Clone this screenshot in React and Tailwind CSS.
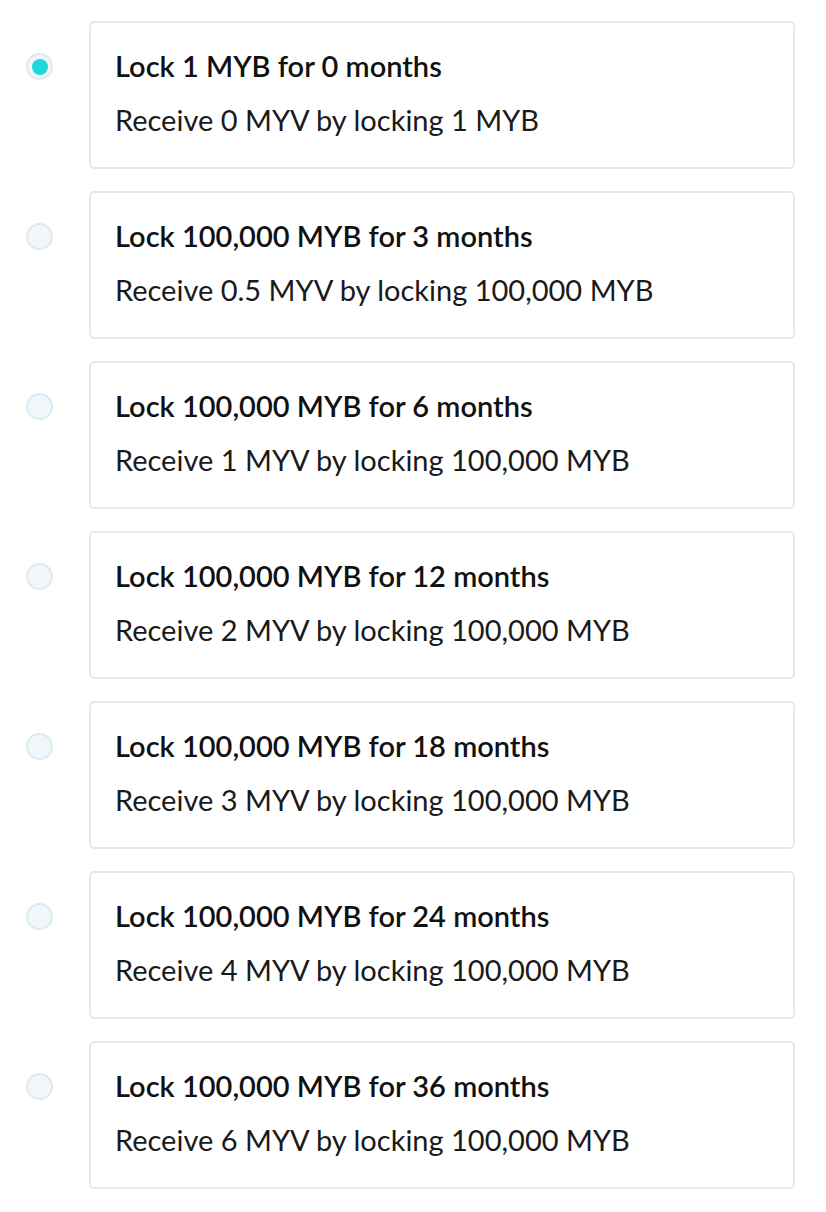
import React from "react";

const OPTIONS = [
  { lock: "1", months: 0, receive: "0" },
  { lock: "100,000", months: 3, receive: "0.5" },
  { lock: "100,000", months: 6, receive: "1" },
  { lock: "100,000", months: 12, receive: "2" },
  { lock: "100,000", months: 18, receive: "3" },
  { lock: "100,000", months: 24, receive: "4" },
  { lock: "100,000", months: 36, receive: "6" },
];

const Radio = ({ checked }) => (
  <div className="w-[27px] h-[27px] rounded-full border-2 border-[#dcebf1] bg-[#f0f6f9] flex items-center justify-center">
    {checked && <div className="w-[16px] h-[16px] rounded-full bg-[#1fd8d8]" />}
  </div>
);

export default function App() {
  const selected = 0;

  return (
    <div
      className="w-full bg-white pt-[21px] pl-[26px] pr-[31px] flex flex-col gap-[22px]"
      style={{ fontFamily: '"Lato", "Liberation Sans", sans-serif' }}
    >
      {OPTIONS.map((opt, i) => (
        <div key={i} className="flex items-start">
          <div className="w-[63px] pt-[32px] shrink-0">
            <Radio checked={i === selected} />
          </div>
          <div className="flex-1 h-[148px] border-2 border-[#e8e8e8] rounded-[5px] pl-[24px] pt-[26px]">
            <p className="text-[29px] leading-[34px] font-semibold text-[#111]">
              Lock {opt.lock} MYB for {opt.months} months
            </p>
            <p className="mt-[20px] text-[29px] leading-[34px] text-[#1a1a1a]">
              Receive {opt.receive} MYV by locking {opt.lock} MYB
            </p>
          </div>
        </div>
      ))}
    </div>
  );
}
